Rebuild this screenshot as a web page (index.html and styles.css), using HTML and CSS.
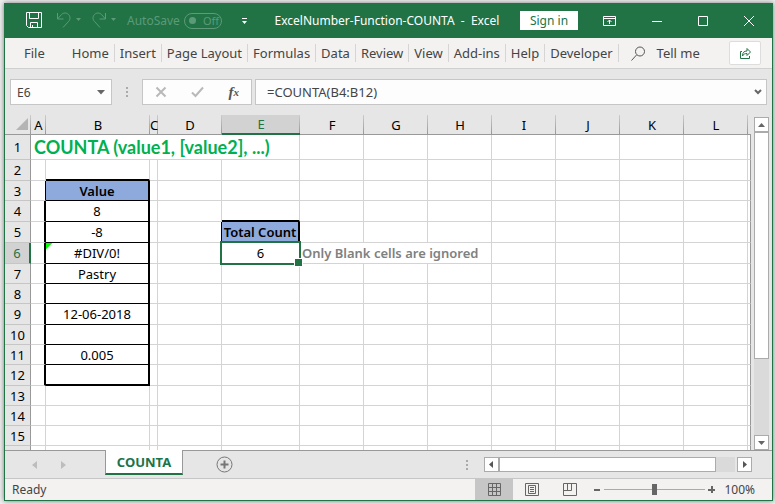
FILE: index.html
```html
<!DOCTYPE html>
<html lang="en">
<head>
  <meta charset="UTF-8" />
  <meta name="viewport" content="width=device-width, initial-scale=1" />
  <title>ExcelNumber-Function-COUNTA - Excel</title>
  <link rel="stylesheet" href="styles.css">
</head>
<body>
  <div class="window">
    <header class="titlebar">
      <div class="quick">
        <button class="icon-btn" aria-label="Save">
          <svg width="17" height="17" viewBox="0 0 17 17" fill="none" stroke="#fff"><path d="M.5.5h15v15H2.500l-2-2zM3.500.5v6h9v-6M4.500 15.500v-5h7v5M6.500 15v-2"/></svg>
        </button>
        <button class="icon-btn undo" aria-label="Undo">
          <svg width="26" height="17" viewBox="0 0 26 17" fill="none" stroke="#5c9a78"><path d="M1.500 1v6h6M1.500 7l4-4.500c2-2 5-2 7 0s2 5 0 7L7 15.500"/><path d="M20 6h5l-2.500 3z" fill="#5c9a78" stroke="none"/></svg>
        </button>
        <button class="icon-btn" aria-label="Redo">
          <svg width="26" height="17" viewBox="0 0 26 17" fill="none" stroke="#5c9a78"><path d="M14.500 1v6h-6M14.500 7l-4-4.500c-2-2-5-2-7 0s-2 5 0 7L9 15.500"/><path d="M20 6h5l-2.500 3z" fill="#5c9a78" stroke="none"/></svg>
        </button>
        <label class="autosave">AutoSave
          <input type="checkbox" disabled>
          <span class="toggle"><i></i>Off</span>
        </label>
        <button class="icon-btn more" aria-label="Customize toolbar">
          <svg width="7" height="8" viewBox="0 0 7 8" fill="#fff"><path d="M1 1h5v1H1zM1 4h5L3.500 7z"/></svg>
        </button>
      </div>
      <div class="doc-title">ExcelNumber-Function-COUNTA&nbsp; -&nbsp; Excel</div>
      <button class="sign-in">Sign in</button>
      <div class="win-btns">
        <button class="icon-btn" aria-label="Ribbon display options">
          <svg width="13" height="10" viewBox="0 0 13 10" fill="none" stroke="#fff"><path d="M.5.5h12v9H.5zM.5 2.500h12M6.500 8V4M4.500 6l2-2 2 2"/></svg>
        </button>
        <button class="icon-btn" aria-label="Minimize">
          <svg width="10" height="10" viewBox="0 0 10 10" stroke="#fff"><path d="M0 5.500h10"/></svg>
        </button>
        <button class="icon-btn" aria-label="Maximize">
          <svg width="10" height="10" viewBox="0 0 10 10" fill="none" stroke="#fff"><path d="M.5.5h9v9h-9z"/></svg>
        </button>
        <button class="icon-btn" aria-label="Close">
          <svg width="10" height="10" viewBox="0 0 10 10" stroke="#fff"><path d="M0 0l10 10M10 0L0 10"/></svg>
        </button>
      </div>
    </header>

    <nav class="ribbon">
      <a class="file" href="#">File</a>
      <a href="#">Home</a>
      <a href="#">Insert</a>
      <a href="#">Page Layout</a>
      <a href="#">Formulas</a>
      <a href="#">Data</a>
      <a href="#">Review</a>
      <a href="#">View</a>
      <a href="#">Add-ins</a>
      <a href="#">Help</a>
      <a href="#">Developer</a>
      <button class="tell-me">
        <svg width="15" height="15" viewBox="0 0 15 15" fill="none" stroke="#555"><circle cx="9" cy="5.500" r="4.500"/><path d="M5.500 9L.5 14.500"/></svg>
        Tell me
      </button>
      <button class="share" aria-label="Share">
        <svg width="13" height="13" viewBox="0 0 13 13" fill="none" stroke="#217346"><path d="M3 4.500H1.500v7h9V9"/><path d="M3.500 9c0-3.500 1.500-5 4.500-5V1.500L11.500 5 8 8.500V6.500C6 6.500 4.500 7 3.500 9z"/></svg>
      </button>
    </nav>

    <div class="formula-bar">
      <div class="box name-box">
        <input type="text" value="E6" aria-label="Name box">
        <button class="icon-btn" aria-label="Open name list">
          <svg width="8" height="5" viewBox="0 0 8 5" fill="#666"><path d="M0 0h8L4 4.500z"/></svg>
        </button>
      </div>
      <span class="dots"></span>
      <div class="box fx-box">
        <button class="icon-btn" aria-label="Cancel">
          <svg width="12" height="12" viewBox="0 0 12 12" stroke="#b9b9b9" stroke-width="2"><path d="M1.500 1.500l9 9M10.500 1.500l-9 9"/></svg>
        </button>
        <button class="icon-btn" aria-label="Enter">
          <svg width="13" height="12" viewBox="0 0 13 12" fill="none" stroke="#b9b9b9" stroke-width="2"><path d="M1 6.500l3.500 3.500L12 1.500"/></svg>
        </button>
        <button class="icon-btn fx" aria-label="Insert function">f<small>x</small></button>
      </div>
      <div class="box formula">
        <input type="text" value="=COUNTA(B4:B12)" aria-label="Formula">
        <button class="icon-btn" aria-label="Expand formula bar">
          <svg width="8" height="6" viewBox="0 0 8 6" fill="none" stroke="#666" stroke-width="2"><path d="M1 1l3 3 3-3"/></svg>
        </button>
      </div>
    </div>

    <main class="work">
      <div class="sheet">
        <table>
          <colgroup>
            <col class="c-head"><col class="c-a"><col class="c-b"><col class="c-c"><col class="c-std"><col class="c-e">
            <col class="c-std"><col class="c-std"><col class="c-std"><col class="c-std"><col class="c-std"><col class="c-std"><col class="c-std">
            <col>
          </colgroup>
          <thead>
            <tr>
              <th class="corner"><svg width="13" height="13" viewBox="0 0 13 13" fill="#b4b4b4"><path d="M13 0v12H1z"/></svg></th>
              <th>A</th><th>B</th><th>C</th><th>D</th><th class="on">E</th><th>F</th><th>G</th><th>H</th><th>I</th><th>J</th><th>K</th><th>L</th><th class="last"></th>
            </tr>
          </thead>
          <tbody>
            <tr class="title-row"><th>1</th><td class="heading" colspan="5">COUNTA (value1, [value2], ...)</td><td></td><td></td><td></td><td></td><td></td><td></td><td></td><td></td></tr>
            <tr class="tall"><th>2</th><td></td><td class="thick-b"></td><td></td><td></td><td></td><td></td><td></td><td></td><td></td><td></td><td></td><td></td><td></td></tr>
            <tr><th>3</th><td class="thin-r"></td><td class="val label">Value</td><td></td><td></td><td></td><td></td><td></td><td></td><td></td><td></td><td></td><td></td><td></td></tr>
            <tr class="tall"><th>4</th><td class="thick-r"></td><td class="val">8</td><td></td><td></td><td class="thick-b"></td><td></td><td></td><td></td><td></td><td></td><td></td><td></td><td></td></tr>
            <tr class="tall"><th>5</th><td class="thick-r"></td><td class="val">-8</td><td></td><td class="thin-r"></td><td class="val label">Total Count</td><td></td><td></td><td></td><td></td><td></td><td></td><td></td><td></td></tr>
            <tr class="tall"><th class="on">6</th><td class="thick-r"></td><td class="val error">#DIV/0!</td><td></td><td></td><td class="active">6<span class="cursor"></span></td><td class="note" colspan="3">Only Blank cells are ignored</td><td></td><td></td><td></td><td></td><td></td></tr>
            <tr><th>7</th><td class="thick-r"></td><td class="val">Pastry</td><td></td><td></td><td></td><td></td><td></td><td></td><td></td><td></td><td></td><td></td><td></td></tr>
            <tr><th>8</th><td class="thick-r"></td><td class="val"></td><td></td><td></td><td></td><td></td><td></td><td></td><td></td><td></td><td></td><td></td><td></td></tr>
            <tr class="tall"><th>9</th><td class="thick-r"></td><td class="val">12-06-2018</td><td></td><td></td><td></td><td></td><td></td><td></td><td></td><td></td><td></td><td></td><td></td></tr>
            <tr><th>10</th><td class="thick-r"></td><td class="val"></td><td></td><td></td><td></td><td></td><td></td><td></td><td></td><td></td><td></td><td></td><td></td></tr>
            <tr><th>11</th><td class="thick-r"></td><td class="val">0.005</td><td></td><td></td><td></td><td></td><td></td><td></td><td></td><td></td><td></td><td></td><td></td></tr>
            <tr class="tall"><th>12</th><td class="thick-r"></td><td class="val thick-b"></td><td></td><td></td><td></td><td></td><td></td><td></td><td></td><td></td><td></td><td></td><td></td></tr>
            <tr><th>13</th><td></td><td></td><td></td><td></td><td></td><td></td><td></td><td></td><td></td><td></td><td></td><td></td><td></td></tr>
            <tr><th>14</th><td></td><td></td><td></td><td></td><td></td><td></td><td></td><td></td><td></td><td></td><td></td><td></td><td></td></tr>
            <tr><th>15</th><td></td><td></td><td></td><td></td><td></td><td></td><td></td><td></td><td></td><td></td><td></td><td></td><td></td></tr>
            <tr><th></th><td></td><td></td><td></td><td></td><td></td><td></td><td></td><td></td><td></td><td></td><td></td><td></td><td></td></tr>
          </tbody>
        </table>
      </div>
      <div class="scroll vertical">
        <button aria-label="Scroll up"><svg width="7" height="4" viewBox="0 0 7 4" fill="#666"><path d="M0 4h7L3.500 0z"/></svg></button>
        <div class="track"><div class="thumb"></div></div>
        <button aria-label="Scroll down"><svg width="7" height="4" viewBox="0 0 7 4" fill="#666"><path d="M0 0h7L3.500 4z"/></svg></button>
      </div>
    </main>

    <div class="sheet-bar">
      <div class="sheet-nav">
        <button class="icon-btn" aria-label="Previous sheet"><svg width="5" height="8" viewBox="0 0 5 8" fill="#bdbdbd"><path d="M5 0v8L0 4z"/></svg></button>
        <button class="icon-btn" aria-label="Next sheet"><svg width="5" height="8" viewBox="0 0 5 8" fill="#bdbdbd"><path d="M0 0v8l5-4z"/></svg></button>
      </div>
      <button class="sheet-tab">COUNTA</button>
      <button class="icon-btn add" aria-label="New sheet">
        <svg width="17" height="17" viewBox="0 0 17 17" fill="none" stroke="#777"><circle cx="8.500" cy="8.500" r="7.500"/><path d="M8.500 4.500v8M4.500 8.500h8" stroke-width="2"/></svg>
      </button>
      <span class="dots"></span>
      <div class="scroll horizontal">
        <button aria-label="Scroll left"><svg width="4" height="7" viewBox="0 0 4 7" fill="#555"><path d="M4 0v7L0 3.500z"/></svg></button>
        <div class="track"><div class="thumb"></div></div>
        <button aria-label="Scroll right"><svg width="4" height="7" viewBox="0 0 4 7" fill="#555"><path d="M0 0v7l4-3.500z"/></svg></button>
      </div>
    </div>

    <footer class="status">
      <span class="ready">Ready</span>
      <button class="view on" aria-label="Normal view">
        <svg width="13" height="13" viewBox="0 0 13 13" fill="none" stroke="#666"><path d="M.5.5h12v12H.5zM4.500 0v13M8.500 0v13M0 4.500h13M0 8.500h13"/></svg>
      </button>
      <button class="view" aria-label="Page layout view">
        <svg width="14" height="13" viewBox="0 0 14 13" fill="none" stroke="#666"><path d="M.5.5h13v12H.5zM3.500 2.500h7v8h-7zM5 4.500h4M5 6.500h4M5 8.500h4"/></svg>
      </button>
      <button class="view" aria-label="Page break preview">
        <svg width="14" height="13" viewBox="0 0 14 13" fill="none" stroke="#666"><path d="M.5.5h13v12H.5zM.5 7.500h8v-7M4.500.5v7"/></svg>
      </button>
      <div class="zoom">
        <button class="icon-btn" aria-label="Zoom out"><svg width="7" height="7" viewBox="0 0 7 7" fill="#666"><path d="M0 3h6v2H0z"/></svg></button>
        <input type="range" min="0" max="200" value="100" aria-label="Zoom">
        <button class="icon-btn" aria-label="Zoom in"><svg width="7" height="7" viewBox="0 0 7 7" fill="#666"><path d="M0 3h3V0h2v3h2v2H5v2H3V5H0z"/></svg></button>
      </div>
      <span class="percent">100%</span>
    </footer>
  </div>
</body>
</html>
```
FILE: styles.css
```css
* {
  box-sizing: border-box;
}

body {
  margin: 0;
  height: 100vh;
  padding: 3px 2px 3px 4px;
  background: #eee;
  font-family: 'Noto Sans', 'Open Sans', sans-serif;
  font-size: 12px;
  color: #444;
}

button,
input {
  margin: 0;
  padding: 0;
  border: none;
  background: none;
  font: inherit;
  color: inherit;
}

button {
  display: flex;
  align-items: center;
  justify-content: center;
}

svg {
  display: block;
  flex: none;
}

.window {
  display: flex;
  flex-direction: column;
  height: 100%;
  border: 1px solid #217346;
  border-top: none;
  background: #e6e6e6;
  box-shadow: 0 0 5px #777;
}

/* title bar */
.titlebar {
  display: flex;
  align-items: center;
  height: 35px;
  flex: none;
  background: #217346;
  color: #fff;
}

.quick {
  display: flex;
  align-items: center;
  padding-left: 21px;
}

.undo {
  margin: 0 9px 0 13px;
}

.autosave {
  display: flex;
  align-items: center;
  gap: 4px;
  margin-left: 10px;
  color: #5c9a78;
}

.autosave input {
  position: absolute;
  opacity: 0;
}

.toggle {
  display: flex;
  align-items: center;
  gap: 7px;
  width: 38px;
  height: 16px;
  padding-left: 4px;
  border: 1px solid #5c9a78;
  border-radius: 8px;
  font-size: 11px;
}

.toggle i {
  width: 7px;
  height: 7px;
  border-radius: 50%;
  background: #5c9a78;
}

.more {
  margin-left: 19px;
}

.doc-title {
  flex: 1;
  padding-left: 6px;
  text-align: center;
  white-space: nowrap;
}

.sign-in {
  width: 58px;
  height: 19px;
  background: #fff;
  color: #217346;
}

.win-btns {
  display: flex;
  align-items: center;
  gap: 36px;
  padding: 0 18px 0 25px;
}

/* ribbon tabs */
.ribbon {
  display: flex;
  align-items: center;
  height: 31px;
  flex: none;
  border-bottom: 1px solid #d0d0d0;
  background: #f3f2f1;
  font-size: 13px;
}

.ribbon a {
  padding: 0 5px;
  border-right: 1px solid #d5d5d5;
  color: #444;
  line-height: 18px;
  text-decoration: none;
  white-space: nowrap;
}

.ribbon .file {
  padding: 0 22px 0 19px;
  border: none;
}

.tell-me {
  gap: 11px;
  margin-left: 12px;
}

.share {
  width: 32px;
  height: 24px;
  margin: 0 11px 0 auto;
  border: 1px solid #ddd;
  border-radius: 2px;
  background: #fff;
}

/* formula bar */
.formula-bar {
  display: flex;
  align-items: center;
  height: 46px;
  flex: none;
  padding: 0 5px 0 5px;
}

.box {
  display: flex;
  align-items: center;
  height: 26px;
  border: 1px solid #c6c6c6;
  background: #fdfdfd;
}

.box input {
  flex: 1;
  min-width: 0;
}

.name-box {
  width: 102px;
  padding: 0 6px;
}

.dots {
  width: 2px;
  height: 10px;
  background: repeating-linear-gradient(#aaa 0 2px, transparent 2px 4px);
}

.formula-bar .dots {
  margin: 0 14px;
}

.fx-box {
  justify-content: space-between;
  width: 110px;
  padding: 0 12px;
}

.fx {
  font: italic bold 15px 'Liberation Serif', serif;
  color: #555;
}

.fx small {
  font-size: 11px;
}

.formula {
  flex: 1;
  margin-left: 3px;
  padding: 0 4px 0 11px;
  font-size: 13px;
}

/* grid */
.work {
  display: flex;
  flex: 1;
  min-height: 0;
}

.sheet {
  flex: 1;
  min-width: 0;
  overflow: hidden;
}

table {
  width: 100%;
  table-layout: fixed;
  border-spacing: 0;
  color: #000;
  font-size: 13px;
  line-height: 16px;
}

.c-head { width: 26px; }
.c-a { width: 15px; }
.c-b { width: 104px; }
.c-c { width: 8px; }
.c-std { width: 64px; }
.c-e { width: 78px; }

th,
td {
  height: 20px;
  padding: 0;
  text-align: center;
  white-space: nowrap;
}

th {
  font-weight: normal;
}

.tall > * {
  height: 21px;
}

.title-row > * {
  height: 25px;
}

thead th {
  overflow: hidden;
  border-bottom: 1px solid #999;
  background: linear-gradient(#ccc, #999) right / 1px 100% no-repeat #e6e6e6;
}

thead .on {
  border-bottom: 2px solid #217346;
  background-color: #d2d2d2;
  color: #217346;
}

thead .last {
  background: #e6e6e6;
}

.corner svg {
  margin: 0 0 0 10px;
}

tbody th {
  border-right: 1px solid #999;
  border-bottom: 1px solid #c6c6c6;
  background: #e6e6e6;
}

tbody .on {
  border-right: 2px solid #217346;
  background: #d2d2d2;
  color: #217346;
}

td {
  border-right: 1px solid #d4d4d4;
  border-bottom: 1px solid #d4d4d4;
  background: #fff;
}

td:last-child {
  border-right-color: #999;
}

.heading {
  padding-left: 3px;
  color: #00b050;
  font: bold 18px/20px Lato, sans-serif;
  text-align: left;
}

.thin-r {
  border-right: 1px solid #000;
}

.thick-r {
  border-right: 2px solid #000;
}

.val {
  border-right: 2px solid #000;
  border-bottom: 1px solid #000;
}

.thick-b {
  border-bottom: 2px solid #000;
}

.label {
  background: #8ea9db;
  font-weight: 600;
}

.error {
  background: linear-gradient(135deg, #0f0 4px, #fff 5px);
}

.active {
  position: relative;
}

.cursor {
  position: absolute;
  inset: -2px;
  border: 2px solid #217346;
}

.cursor::after {
  content: '';
  position: absolute;
  right: -4px;
  bottom: -4px;
  width: 7px;
  height: 7px;
  border: 1px solid #fff;
  background: #217346;
  background-clip: padding-box;
}

.note {
  padding-left: 2px;
  color: #808080;
  font-weight: 600;
  text-align: left;
}

/* scroll bars */
.scroll {
  display: flex;
}

.scroll button {
  width: 15px;
  height: 15px;
  flex: none;
  border: 1px solid #ababab;
  background: #fff;
}

.track {
  flex: 1;
  background: #dadada;
}

.thumb {
  border: 1px solid #ababab;
  background: #fff;
}

.vertical {
  flex-direction: column;
  margin: 2px 3px 0;
}

.vertical .thumb {
  height: 75%;
}

.horizontal {
  width: 35%;
  margin: 0 20px 0 16px;
}

.horizontal .track {
  margin-right: 2px;
}

.horizontal .thumb {
  width: 92%;
  height: 100%;
}

/* sheet tabs */
.sheet-bar {
  display: flex;
  align-items: center;
  height: 29px;
  flex: none;
  border-top: 1px solid #999;
  border-bottom: 1px solid #c6c6c6;
}

.sheet-nav {
  display: flex;
  gap: 24px;
  padding: 0 39px 0 27px;
}

.sheet-tab {
  align-self: flex-start;
  width: 78px;
  height: 25px;
  margin-top: -1px;
  border: 1px solid #999;
  border-top: none;
  border-bottom: 2px solid #217346;
  background: #fff;
  color: #217346;
  font-size: 13px;
  font-weight: bold;
}

.add {
  margin: 0 auto 0 33px;
}

/* status bar */
.status {
  display: flex;
  align-items: center;
  height: 21px;
  flex: none;
  background: #f3f2f1;
}

.ready {
  margin: 0 auto 0 7px;
}

.view {
  width: 38px;
  height: 100%;
}

.view.on {
  background: #c6c6c6;
}

.zoom {
  display: flex;
  align-items: center;
  gap: 3px;
  margin-left: 5px;
}

.zoom input {
  appearance: none;
  width: 101px;
  height: 11px;
  background: linear-gradient(#aaa, #aaa) center / 100% 1px no-repeat;
}

.zoom input::-webkit-slider-thumb {
  appearance: none;
  width: 5px;
  height: 11px;
  background: #666;
}

.percent {
  margin: 0 17px 0 9px;
}
```
